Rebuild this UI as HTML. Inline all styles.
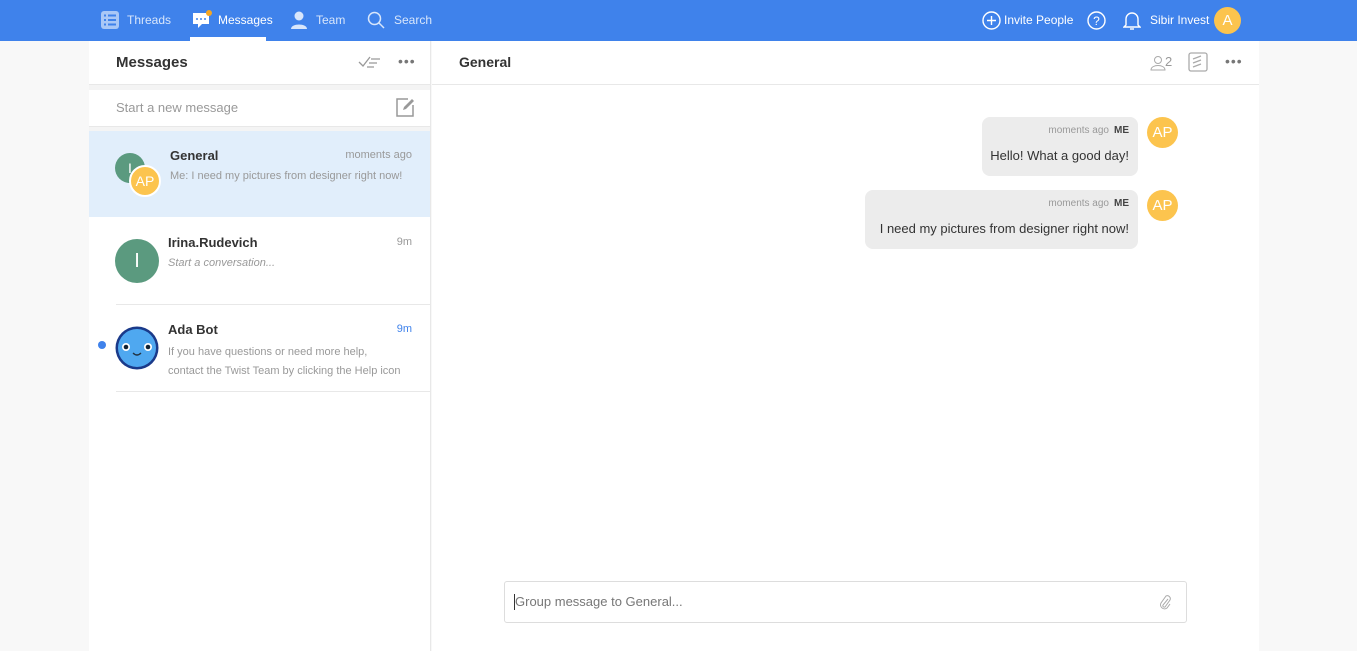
<!DOCTYPE html>
<html><head><meta charset="utf-8"><style>
*{box-sizing:border-box;margin:0;padding:0}
body{width:1357px;height:651px;overflow:hidden;background:#f8f8f8;font-family:"Liberation Sans",sans-serif;color:#333;position:relative}
.top{position:absolute;left:0;top:0;width:1357px;height:41px;background:#3f82eb;color:#fff;font-size:12px}
.ab{position:absolute}
.nav{position:absolute;top:13px;color:#d8e6fb}
.left{position:absolute;left:89px;top:41px;width:342px;height:610px;background:#fff;border-right:1px solid #e8e8e8}
.right{position:absolute;left:432px;top:41px;width:827px;height:610px;background:#fff}
.av{position:absolute;border-radius:50%;color:#fff;text-align:center}
.bub{position:absolute;background:#ececec;border-radius:8px;right:121px}
.meta{position:absolute;right:9px;top:8px;font-size:10px;color:#999}
.meta b{color:#444;margin-left:5px}
</style></head><body>
<div class="top">
 <svg class="ab" style="left:101px;top:11px" width="18" height="18"><rect x="0" y="0" width="18" height="18" rx="3" fill="#a9c7f6"/><g fill="#3f82eb"><rect x="3" y="3.5" width="2" height="2"/><rect x="7" y="3.5" width="8" height="2"/><rect x="3" y="8" width="2" height="2"/><rect x="7" y="8" width="8" height="2"/><rect x="3" y="12.5" width="2" height="2"/><rect x="7" y="12.5" width="8" height="2"/></g></svg>
 <span class="nav" style="left:127px">Threads</span>
 <svg class="ab" style="left:191px;top:10px" width="22" height="20"><path d="M2 3h16v11h-7l-4 4v-4H2z" fill="#fff"/><circle cx="6" cy="9" r="1" fill="#3f82eb"/><circle cx="10" cy="9" r="1" fill="#3f82eb"/><circle cx="14" cy="9" r="1" fill="#3f82eb"/><circle cx="18" cy="3" r="3" fill="#f5a623"/></svg>
 <span class="nav" style="left:218px;color:#fff">Messages</span>
 <div class="ab" style="left:190px;top:37px;width:76px;height:4px;background:#fff"></div>
 <svg class="ab" style="left:290px;top:11px" width="18" height="18"><circle cx="9" cy="5" r="4.5" fill="#d8e6fb"/><path d="M1 18c0-6 16-6 16 0z" fill="#d8e6fb"/></svg>
 <span class="nav" style="left:316px">Team</span>
 <svg class="ab" style="left:367px;top:11px" width="18" height="18"><circle cx="7.5" cy="7.5" r="6" fill="none" stroke="#d8e6fb" stroke-width="1.5"/><path d="M12 12l5 5" stroke="#d8e6fb" stroke-width="1.5"/></svg>
 <span class="nav" style="left:394px">Search</span>
 <svg class="ab" style="left:982px;top:11px" width="19" height="19"><circle cx="9.5" cy="9.5" r="8.5" fill="none" stroke="#fff" stroke-width="1.4"/><path d="M9.5 5v9M5 9.5h9" stroke="#fff" stroke-width="1.4"/></svg>
 <span class="ab" style="left:1004px;top:13px">Invite People</span>
 <svg class="ab" style="left:1087px;top:11px" width="19" height="19"><circle cx="9.5" cy="9.5" r="8.5" fill="none" stroke="#fff" stroke-width="1.4"/><text x="9.5" y="14" font-size="12" fill="#fff" text-anchor="middle" font-family="Liberation Sans">?</text></svg>
 <svg class="ab" style="left:1123px;top:10px" width="18" height="21"><path d="M3 15V9a6 6 0 0 1 12 0v6l2 2H1z" fill="none" stroke="#fff" stroke-width="1.4"/><path d="M7 19h4" stroke="#fff" stroke-width="1.4"/></svg>
 <span class="ab" style="left:1150px;top:13px">Sibir Invest</span>
 <div class="av" style="left:1214px;top:7px;width:27px;height:27px;background:#fcc44e;line-height:27px;font-size:15px">A</div>
</div>

<div class="left">
 <div class="ab" style="left:27px;top:13px;font-size:15px;font-weight:bold;color:#333">Messages</div>
 <svg class="ab" style="left:269px;top:15px" width="24" height="12"><path d="M1 6l4 4 7-9" fill="none" stroke="#999" stroke-width="1.3"/><path d="M13 3h9M11 7h8M9 11h7" stroke="#999" stroke-width="1.3"/></svg>
 <div class="ab" style="left:309px;top:12px;font-size:14px;color:#777;letter-spacing:1px">•••</div>
 <div class="ab" style="left:0;top:43px;width:341px;height:6px;background:#f4f4f4;border-top:1px solid #e8e8e8"></div>
 <div class="ab" style="left:27px;top:59px;font-size:13px;color:#999">Start a new message</div>
 <svg class="ab" style="left:306px;top:56px" width="20" height="20"><path d="M13 2H2v17h16V8" fill="none" stroke="#999" stroke-width="1.5"/><path d="M8 13l1-3 8-8 2 2-8 8z" fill="#999"/></svg>
 <div class="ab" style="left:0;top:85px;width:341px;height:5px;background:#f4f4f4;border-top:1px solid #e8e8e8"></div>
 <div class="ab" style="left:0;top:90px;width:341px;height:86px;background:#e1eefb"></div>
 <div class="av" style="left:26px;top:112px;width:30px;height:30px;background:#5b9a7f;line-height:30px;font-size:14px">I</div>
 <div class="av" style="left:40px;top:124px;width:32px;height:32px;background:#fcc44e;border:2px solid #fff;line-height:28px;font-size:14px">AP</div>
 <div class="ab" style="left:81px;top:107px;font-size:13px;font-weight:bold">General</div>
 <div class="ab" style="right:18px;top:108px;font-size:11px;color:#999">moments ago</div>
 <div class="ab" style="left:81px;top:129px;font-size:11px;color:#999">Me: I need my pictures from designer right now!</div>
 <div class="av" style="left:26px;top:198px;width:44px;height:44px;background:#5b9a7f;line-height:44px;font-size:20px">I</div>
 <div class="ab" style="left:79px;top:194px;font-size:13px;font-weight:bold">Irina.Rudevich</div>
 <div class="ab" style="right:18px;top:195px;font-size:11px;color:#999">9m</div>
 <div class="ab" style="left:79px;top:216px;font-size:11px;color:#999;font-style:italic">Start a conversation...</div>
 <div class="ab" style="left:27px;top:263px;width:315px;height:1px;background:#e8e8e8"></div>
 <div class="ab" style="left:9px;top:300px;width:8px;height:8px;border-radius:50%;background:#3f82eb"></div>
 <svg class="ab" style="left:26px;top:285px" width="44" height="44"><circle cx="22" cy="22" r="21.5" fill="#1a3a8a"/><circle cx="22" cy="22" r="19" fill="#4fa8f0"/><circle cx="11" cy="21" r="4" fill="#fff"/><circle cx="33" cy="21" r="4" fill="#fff"/><circle cx="11" cy="21" r="2.3" fill="#123"/><circle cx="33" cy="21" r="2.3" fill="#123"/><path d="M18 27q4 4 8 0" fill="none" stroke="#234" stroke-width="1.3"/></svg>
 <div class="ab" style="left:79px;top:281px;font-size:13px;font-weight:bold">Ada Bot</div>
 <div class="ab" style="right:18px;top:282px;font-size:11px;color:#3f82eb">9m</div>
 <div class="ab" style="left:79px;top:302px;font-size:11px;color:#999;line-height:19px">If you have questions or need more help,<br>contact the Twist Team by clicking the Help icon</div>
 <div class="ab" style="left:27px;top:350px;width:315px;height:1px;background:#e8e8e8"></div>
</div>

<div class="right">
 <div class="ab" style="left:27px;top:13px;font-size:14px;font-weight:bold">General</div>
 <svg class="ab" style="left:718px;top:14px" width="16" height="16"><circle cx="8" cy="5" r="3.5" fill="none" stroke="#aaa"/><path d="M1 15c0-6 14-6 14 0z" fill="none" stroke="#aaa"/></svg>
 <div class="ab" style="left:733px;top:13px;font-size:13px;color:#999">2</div>
 <svg class="ab" style="left:756px;top:11px" width="20" height="20"><rect x="1" y="1" width="18" height="18" rx="2" fill="none" stroke="#aaa" stroke-width="1.3"/><path d="M5 7l8-3M5 11l8-3M5 15l8-3" stroke="#aaa" stroke-width="1.3"/></svg>
 <div class="ab" style="left:793px;top:12px;font-size:14px;color:#777;letter-spacing:1px">•••</div>
 <div class="ab" style="left:0;top:43px;width:827px;height:1px;background:#e8e8e8"></div>
 <div class="bub" style="left:550px;top:76px;width:156px;height:59px"><div class="meta">moments ago<b>ME</b></div><div class="ab" style="right:9px;top:31px;font-size:13px">Hello! What a good day!</div></div>
 <div class="av" style="left:715px;top:76px;width:31px;height:31px;background:#fcc44e;line-height:31px;font-size:15px">AP</div>
 <div class="bub" style="left:433px;top:149px;width:273px;height:59px"><div class="meta">moments ago<b>ME</b></div><div class="ab" style="right:9px;top:31px;font-size:13px">I need my pictures from designer right now!</div></div>
 <div class="av" style="left:715px;top:149px;width:31px;height:31px;background:#fcc44e;line-height:31px;font-size:15px">AP</div>
 <div class="ab" style="left:72px;top:540px;width:683px;height:42px;border:1px solid #ddd;border-radius:3px"></div>
 <div class="ab" style="left:82px;top:553px;width:1px;height:16px;background:#333"></div>
 <div class="ab" style="left:83px;top:553px;font-size:13px;color:#777">Group message to General...</div>
 <svg class="ab" style="left:727px;top:553px" width="12" height="16"><path d="M9 5l-5 6a1.5 1.5 0 0 0 2 2l5-7a3 3 0 0 0-4-4L2 9a4 4 0 0 0 6 5l3-4" fill="none" stroke="#aaa" stroke-width="1"/></svg>
</div>
</body></html>
